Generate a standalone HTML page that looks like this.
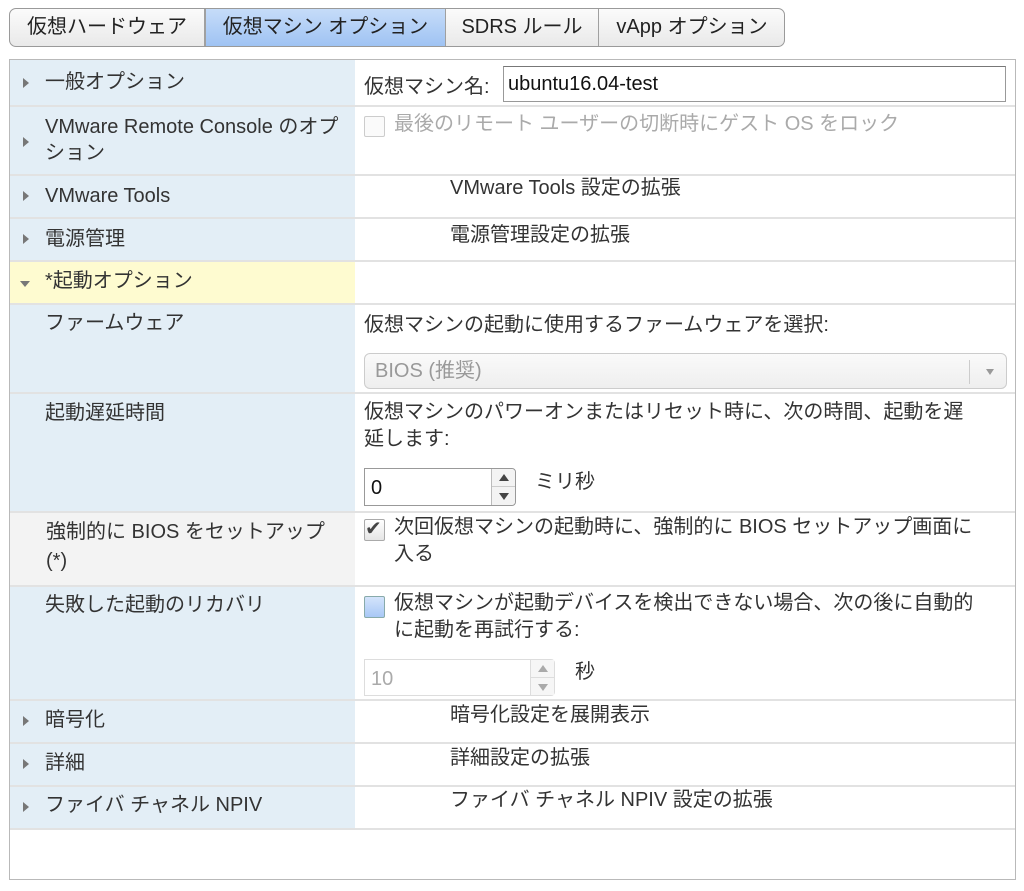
<!DOCTYPE html>
<html><head><meta charset="utf-8"><style>
*{margin:0;padding:0;box-sizing:border-box}
body{width:1024px;height:891px;background:#fff;font-family:"Liberation Sans","Noto Sans CJK JP",sans-serif;font-size:20px;color:#333;position:relative;overflow:hidden}
.a{position:absolute;white-space:nowrap;line-height:24px}
.tabs{position:absolute;left:9px;top:8px;height:39px;width:776px;border:1px solid #9a9a9a;border-radius:7px;background:linear-gradient(#fbfbfb,#e9e9e9);overflow:hidden}
.tab{position:absolute;top:0;height:37px;line-height:36px;text-align:center;border-right:1px solid #a0a0a0;font-size:20px;color:#222}
.box{position:absolute;left:9px;top:59px;width:1007px;height:821px;border:1px solid #b9b9b9}
.row{position:absolute;left:10px;width:1005px;border-bottom:2px solid #e2e2e2}
.l{position:absolute;left:0;top:0;bottom:0;width:345px;background:#e3eef6}
.tri{position:absolute;left:13px;width:0;height:0;border-left:6px solid #777;border-top:5px solid transparent;border-bottom:5px solid transparent}
.lt{position:absolute;left:35px}
.rt{position:absolute;left:354px}
.ct{position:absolute;left:440px}
</style></head><body>
<div class="tabs">
<div class="tab" style="left:0;width:195px">仮想ハードウェア</div>
<div class="tab" style="left:195px;width:241px;background:linear-gradient(#c6dcf9,#9fc3f3);border-left:1px solid #a0a0a0">仮想マシン オプション</div>
<div class="tab" style="left:436px;width:153px">SDRS ルール</div>
<div class="tab" style="left:589px;width:186px;border-right:none">vApp オプション</div>
</div>
<div class="box"></div>

<div class="row" style="top:60px;height:47px"><div class="l"></div><div class="tri" style="top:18px"></div><div class="a lt" style="top:10px">一般オプション</div>
<div class="a rt" style="top:15px">仮想マシン名:</div>
<div class="a" style="left:493px;top:6px;width:503px;height:36px;border:1px solid #999;border-top-color:#777;padding:5px 4px;line-height:24px;color:#111">ubuntu16.04-test</div></div>

<div class="row" style="top:107px;height:69px"><div class="l"></div><div class="tri" style="top:30px"></div><div class="a lt" style="top:7px;line-height:26px;white-space:normal;width:310px">VMware Remote Console のオプション</div>
<div class="a" style="left:354px;top:9px;width:21px;height:21px;border:1px solid #ccc;border-radius:2px;background:#fafafa"></div>
<div class="a" style="left:384px;top:5px;color:#aaa">最後のリモート ユーザーの切断時にゲスト OS をロック</div></div>

<div class="row" style="top:176px;height:43px"><div class="l"></div><div class="tri" style="top:15px"></div><div class="a lt" style="top:8px">VMware Tools</div><div class="a ct" style="top:0px">VMware Tools 設定の拡張</div></div>

<div class="row" style="top:219px;height:43px"><div class="l"></div><div class="tri" style="top:15px"></div><div class="a lt" style="top:8px">電源管理</div><div class="a ct" style="top:4px">電源管理設定の拡張</div></div>

<div class="row" style="top:262px;height:43px"><div class="l" style="background:#fefbd0"></div><div class="a" style="left:10px;top:19px;width:0;height:0;border-top:6px solid #777;border-left:5px solid transparent;border-right:5px solid transparent"></div><div class="a lt" style="top:7px">*起動オプション</div></div>

<div class="row" style="top:305px;height:89px"><div class="l"></div><div class="a lt" style="top:6px">ファームウェア</div>
<div class="a rt" style="top:8px">仮想マシンの起動に使用するファームウェアを選択:</div>
<div class="a" style="left:354px;top:48px;width:643px;height:36px;border:1px solid #ccc;border-radius:6px;background:linear-gradient(#fafafa,#eee)"><span class="a" style="left:10px;top:5px;color:#999">BIOS (推奨)</span><span class="a" style="right:36px;top:6px;height:24px;border-left:1px solid #ccc"></span><span class="a" style="right:12px;top:15px;border-top:6px solid #999;border-left:4px solid transparent;border-right:4px solid transparent"></span></div></div>

<div class="row" style="top:394px;height:119px"><div class="l"></div><div class="a lt" style="top:7px">起動遅延時間</div>
<div class="a rt" style="top:5px;line-height:27px">仮想マシンのパワーオンまたはリセット時に、次の時間、起動を遅<br>延します:</div>
<div class="a" style="left:354px;top:74px;width:152px;height:38px;border:1px solid #999;border-radius:0 4px 4px 0;background:#fff"><span class="a" style="left:6px;top:7px;color:#111">0</span><span class="a" style="right:0;top:0;width:24px;height:36px;border-left:1px solid #bbb;background:#f3f3f3;border-radius:0 4px 4px 0"><span class="a" style="left:7px;top:5px;border-bottom:7px solid #444;border-left:5px solid transparent;border-right:5px solid transparent"></span><span class="a" style="left:0;top:17px;width:23px;border-top:1px solid #ccc"></span><span class="a" style="left:7px;top:24px;border-top:7px solid #444;border-left:5px solid transparent;border-right:5px solid transparent"></span></span></div>
<div class="a" style="left:525px;top:76px">ミリ秒</div></div>

<div class="row" style="top:513px;height:74px"><div class="l" style="background:#f3f3f3"></div><div class="a lt" style="top:5px;line-height:29px;left:36px">強制的に BIOS をセットアップ<br>(*)</div>
<div class="a" style="left:354px;top:6px;width:21px;height:22px;border:1px solid #aaa;border-radius:2px;background:linear-gradient(#fff,#e5e5e5)"></div>
<div class="a" style="left:355px;top:4px;font-size:20px;color:#444">✔</div>
<div class="a" style="left:384px;top:1px;line-height:27px">次回仮想マシンの起動時に、強制的に BIOS セットアップ画面に<br>入る</div></div>

<div class="row" style="top:587px;height:114px"><div class="l"></div><div class="a lt" style="top:6px">失敗した起動のリカバリ</div>
<div class="a" style="left:354px;top:9px;width:21px;height:22px;border:1px solid #8aa;border-radius:2px;background:linear-gradient(#d4e4fb,#a8c8f6)"></div>
<div class="a" style="left:384px;top:3px;line-height:27px">仮想マシンが起動デバイスを検出できない場合、次の後に自動的<br>に起動を再試行する:</div>
<div class="a" style="left:354px;top:72px;width:191px;height:37px;border:1px solid #ddd;border-radius:0 4px 4px 0"><span class="a" style="left:6px;top:7px;color:#aaa">10</span><span class="a" style="right:0;top:0;width:24px;height:35px;border-left:1px solid #ddd;background:#f6f6f6"><span class="a" style="left:7px;top:5px;border-bottom:7px solid #aaa;border-left:5px solid transparent;border-right:5px solid transparent"></span><span class="a" style="left:0;top:17px;width:23px;border-top:1px solid #ddd"></span><span class="a" style="left:7px;top:24px;border-top:7px solid #aaa;border-left:5px solid transparent;border-right:5px solid transparent"></span></span></div>
<div class="a" style="left:565px;top:73px">秒</div></div>

<div class="row" style="top:701px;height:43px"><div class="l"></div><div class="tri" style="top:15px"></div><div class="a lt" style="top:7px">暗号化</div><div class="a ct" style="top:2px">暗号化設定を展開表示</div></div>
<div class="row" style="top:744px;height:43px"><div class="l"></div><div class="tri" style="top:15px"></div><div class="a lt" style="top:7px">詳細</div><div class="a ct" style="top:2px">詳細設定の拡張</div></div>
<div class="row" style="top:787px;height:43px"><div class="l"></div><div class="tri" style="top:15px"></div><div class="a lt" style="top:6px">ファイバ チャネル NPIV</div><div class="a ct" style="top:1px">ファイバ チャネル NPIV 設定の拡張</div></div>
</body></html>
